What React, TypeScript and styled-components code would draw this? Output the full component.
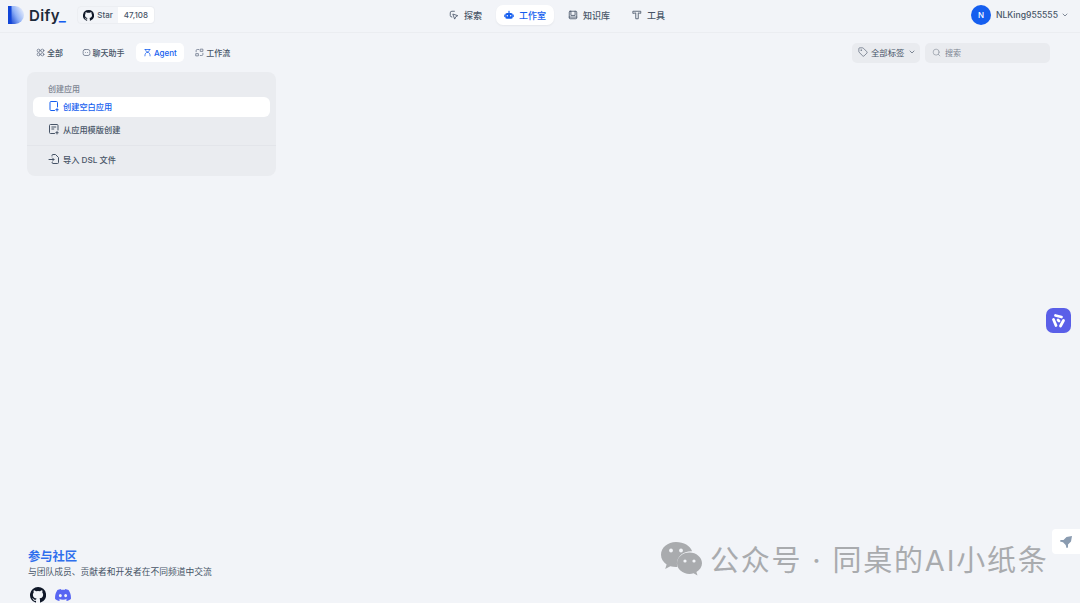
import React from 'react';
import styled, { createGlobalStyle } from 'styled-components';
import { ChevronDown, Search, Tag } from 'lucide-react';

const GlobalStyle = createGlobalStyle`
  html, body {
    margin: 0;
    height: 100%;
    overflow: hidden;
    background: #f2f4f8;
    font-family: Inter, "Noto Sans CJK SC", "Liberation Sans", sans-serif;
  }
  #root { height: 100%; }
`;

const Page = styled.div`
  position: relative;
  height: 603px;
  display: flex;
  flex-direction: column;
  overflow: hidden;
`;

const Header = styled.header`
  height: 30px;
  padding: 0 11px 2px 8px;
  flex-shrink: 0;
  display: grid;
  grid-template-columns: 433px auto 1fr;
  align-items: center;
  border-bottom: 1px solid #ebedf1;
`;

const Brand = styled.div`
  display: flex;
  align-items: center;
`;

const LogoText = styled.span`
  margin-left: 5px;
  font-size: 15px;
  font-weight: 600;
  letter-spacing: 0.4px;
  color: #1d2939;
`;

const LogoDash = styled.span`
  color: #155eef;
`;

const StarBadge = styled.div`
  margin-left: 11px;
  height: 16px;
  display: flex;
  align-items: center;
  border-radius: 4px;
  border: 1px solid #eceef2;
  font-size: 8px;
  font-weight: 500;
  color: #475467;
`;

const StarLabel = styled.span`
  display: flex;
  align-items: center;
  gap: 3px;
  padding: 0 5px;
`;

const StarCount = styled.span`
  height: 100%;
  display: flex;
  align-items: center;
  padding: 0 6px;
  background: #fff;
  border-radius: 0 4px 4px 0;
`;

const Nav = styled.nav`
  display: flex;
  align-items: center;
  gap: 6px;
`;

const NavItem = styled.div<{ $active?: boolean }>`
  height: 20px;
  display: flex;
  align-items: center;
  gap: 5px;
  padding: 0 8px;
  border-radius: 7px;
  font-size: 9px;
  font-weight: 500;
  color: ${({ $active }) => ($active ? '#155eef' : '#475467')};
  background: ${({ $active }) => ($active ? '#fff' : 'transparent')};
  box-shadow: ${({ $active }) => ($active ? '0 1px 2px rgba(16, 24, 40, 0.06)' : 'none')};
`;

const Account = styled.div`
  justify-self: end;
  display: flex;
  align-items: center;
  gap: 3px;
  font-size: 8.6px;
  font-weight: 500;
  color: #475467;
`;

const Avatar = styled.span`
  width: 20px;
  height: 20px;
  margin-right: 2px;
  border-radius: 50%;
  display: flex;
  align-items: center;
  justify-content: center;
  background: #155eef;
  color: #fff;
  font-size: 8px;
`;

const Main = styled.main`
  flex: 1;
  min-height: 0;
  display: flex;
  flex-direction: column;
  padding: 10px 30px 0 27px;
`;

const Toolbar = styled.div`
  display: flex;
  align-items: flex-start;
  justify-content: space-between;
  height: 21px;
`;

const Tabs = styled.div`
  display: flex;
  gap: 4.5px;
  padding-left: 2px;
`;

const Tab = styled.div<{ $active?: boolean }>`
  height: 19px;
  display: flex;
  align-items: center;
  gap: 2px;
  padding: 0 7px;
  border-radius: 5px;
  font-size: 8px;
  font-weight: 500;
  color: ${({ $active }) => ($active ? '#155eef' : '#475467')};
  background: ${({ $active }) => ($active ? '#fff' : 'transparent')};
`;

const Filters = styled.div`
  display: flex;
  gap: 5px;
`;

const TagFilter = styled.div`
  width: 68px;
  height: 20px;
  box-sizing: border-box;
  display: flex;
  align-items: center;
  gap: 3px;
  padding: 0 0 2px 6px;
  border-radius: 5px;
  background: #e9ebef;
  font-size: 8.4px;
  color: #475467;
`;

const SearchBox = styled.div`
  width: 125px;
  height: 20px;
  box-sizing: border-box;
  display: flex;
  align-items: center;
  gap: 4px;
  padding: 0 0 1px 7px;
  border-radius: 5px;
  background: #e9ebef;
  font-size: 8px;
  color: #7d8592;
`;

const CreateCard = styled.section`
  margin-top: 8px;
  width: 249px;
  box-sizing: border-box;
  padding: 6px 6px;
  border-radius: 8px;
  background: #eaecf0;
`;

const CardTitle = styled.div`
  height: 17px;
  padding: 2px 0 0 15px;
  display: flex;
  align-items: center;
  font-size: 8px;
  font-weight: 500;
  color: #7d8592;
`;

const CardItem = styled.div<{ $active?: boolean }>`
  height: 18px;
  padding: 0 0 2px 15px;
  display: flex;
  align-items: center;
  gap: 3px;
  border-radius: 6px;
  font-size: 8.2px;
  font-weight: 500;
  color: ${({ $active }) => ($active ? '#155eef' : '#475467')};
  background: ${({ $active }) => ($active ? '#fff' : 'transparent')};

  & + & {
    margin-top: 3px;
  }
`;

const CardDivider = styled.div`
  height: 1px;
  margin: 5px -6px 4px;
  background: #e3e5ea;
`;

const Footer = styled.footer`
  margin-top: auto;
  padding-left: 1px;
`;

const FooterTitle = styled.h2`
  margin: 0;
  font-size: 12.25px;
  line-height: 16px;
  font-weight: 700;
  color: #2f6fed;
`;

const FooterText = styled.p`
  margin: 0;
  font-size: 8.76px;
  line-height: 14px;
  color: #475467;
`;

const FooterLinks = styled.div`
  margin-top: 8px;
  height: 16px;
  display: flex;
  gap: 9px;
  padding-left: 2px;
`;

const Watermark = styled.div`
  position: absolute;
  left: 660px;
  top: 537px;
  display: flex;
  align-items: center;
  gap: 7px;
  font-size: 29px;
  letter-spacing: 1.8px;
  color: #a9abae;
  white-space: nowrap;
`;

const FloatBadge = styled.div`
  position: absolute;
  left: 1046px;
  top: 308px;
  width: 25px;
  height: 25px;
  border-radius: 7px;
  background: #5a5fe8;
  display: flex;
  align-items: center;
  justify-content: center;
`;

const RocketTab = styled.div`
  position: absolute;
  right: 0;
  top: 529px;
  width: 28px;
  height: 25px;
  border-radius: 4px 0 0 4px;
  background: #fff;
  display: flex;
  align-items: center;
  padding-left: 7px;
  box-sizing: border-box;
`;

type IconProps = { size?: number; color?: string };

const Stroke = ({ size = 9, color = '#667085', children }: IconProps & { children: React.ReactNode }) => (
  <svg width={size} height={size} viewBox="0 0 12 12" fill="none" stroke={color} strokeWidth="1" strokeLinecap="round" strokeLinejoin="round">
    {children}
  </svg>
);

const LogoMark = () => (
  <svg width="16" height="18" viewBox="0 0 16 18">
    <defs>
      <linearGradient id="logoFill" x1="0" y1="0.8" x2="1" y2="0.2">
        <stop offset="0" stopColor="#0b3bd0" />
        <stop offset="0.5" stopColor="#8fb0f6" />
        <stop offset="1" stopColor="#eef2fc" />
      </linearGradient>
    </defs>
    <path d="M0 0h7a9 9 0 0 1 0 18H0z" fill="url(#logoFill)" />
    <rect width="3.500" height="18" fill="#1145d8" />
  </svg>
);

const GithubMark = ({ size = 11 }: { size?: number }) => (
  <svg width={size} height={size} viewBox="0 0 16 16" fill="#101828">
    <path d="M8 0a8 8 0 0 0-2.530 15.590c.400.070.550-.170.550-.380v-1.340c-2.230.480-2.700-1.070-2.700-1.070-.360-.930-.890-1.170-.890-1.170-.730-.500.050-.490.050-.490.800.060 1.230.830 1.230.830.710 1.220 1.870.870 2.330.660.070-.520.280-.870.510-1.070-1.780-.200-3.640-.890-3.640-3.950 0-.870.310-1.590.820-2.150-.080-.200-.360-1.020.080-2.120 0 0 .670-.210 2.200.820a7.600 7.600 0 0 1 4 0c1.530-1.040 2.200-.820 2.200-.820.440 1.100.160 1.920.080 2.120.510.560.820 1.270.820 2.150 0 3.070-1.870 3.750-3.650 3.950.290.250.540.730.540 1.480v2.200c0 .210.150.460.550.380A8 8 0 0 0 8 0z" />
  </svg>
);

const DiscordMark = () => (
  <svg width="16" height="16" viewBox="0 0 16 16" fill="#5865f2">
    <path d="M13.550 3.020A13.200 13.200 0 0 0 10.300 2c-.140.250-.300.590-.410.860a12.200 12.200 0 0 0-3.780 0A9 9 0 0 0 5.700 2a13.200 13.200 0 0 0-3.260 1.020C.380 6.100-.180 9.100.100 12.060A13.300 13.300 0 0 0 4.100 14.100c.320-.440.600-.900.850-1.400-.470-.170-.910-.390-1.330-.640l.330-.260a9.500 9.500 0 0 0 8.100 0l.330.260c-.420.250-.870.470-1.330.640.250.500.530.960.850 1.400a13.300 13.300 0 0 0 4-2.040c.330-3.430-.560-6.400-2.350-9.040zM5.350 10.240c-.790 0-1.440-.730-1.440-1.620s.630-1.620 1.440-1.620 1.450.730 1.440 1.620c0 .890-.640 1.620-1.440 1.620zm5.300 0c-.790 0-1.440-.730-1.440-1.620s.630-1.620 1.440-1.620 1.450.730 1.440 1.620c0 .890-.630 1.620-1.440 1.620z" />
  </svg>
);

const WechatMark = () => (
  <svg width="43" height="35" viewBox="0 0 43 35">
    <path d="M16 1C7.700 1 1 6.700 1 13.700c0 4 2.200 7.500 5.600 9.800L5.200 28l5.100-2.700c1.800.500 3.700.800 5.700.800.500 0 1 0 1.400-.100-.300-1.100-.500-2.200-.500-3.400 0-6.900 6.400-12.400 14.200-12.400h1C30.300 4.800 23.800 1 16 1z" fill="#a9abae" />
    <circle cx="11" cy="9.500" r="1.900" fill="#f2f4f8" />
    <circle cx="21" cy="9.500" r="1.900" fill="#f2f4f8" />
    <path d="M42 22.200C42 16.300 36.300 11.500 29.500 11.500S17 16.300 17 22.200s5.700 10.700 12.500 10.700c1.500 0 2.800-.200 4.100-.600l3.900 2.200-1.100-3.600c3.400-2 5.600-5.100 5.600-8.700z" fill="#a9abae" />
    <circle cx="25" cy="20" r="1.600" fill="#f2f4f8" />
    <circle cx="34" cy="20" r="1.600" fill="#f2f4f8" />
  </svg>
);

const tabs = [
  {
    label: '全部',
    icon: (
      <Stroke>
        <circle cx="3.500" cy="3.500" r="2" />
        <circle cx="8.500" cy="3.500" r="2" />
        <circle cx="3.500" cy="8.500" r="2" />
        <circle cx="8.500" cy="8.500" r="2" />
      </Stroke>
    ),
  },
  {
    label: '聊天助手',
    icon: (
      <Stroke>
        <rect x="1.500" y="2" width="9" height="8" rx="2.500" />
        <path d="M4.500 6h.010M7.500 6h.010" />
      </Stroke>
    ),
  },
  {
    label: 'Agent',
    active: true,
    icon: (
      <Stroke color="#155eef">
        <path d="M2.500 2h7M3.500 2c0 2 1 3.500 2.500 3.500S8.500 4 8.500 2M6 5.500c-2 0-3.500 2-3.500 5M6 5.500c2 0 3.500 2 3.500 5" />
      </Stroke>
    ),
  },
  {
    label: '工作流',
    icon: (
      <Stroke>
        <path d="M5 2H3a1.500 1.500 0 0 0-1.500 1.500V5M7 10h2a1.500 1.500 0 0 0 1.500-1.500V7M7.500 1.500h3v3h-3zM1.500 7.500h3v3h-3z" />
      </Stroke>
    ),
  },
];

const navItems = [
  {
    label: '探索',
    icon: (
      <Stroke size={10} color="#475467">
        <path d="M6.500 1.500h-3a2 2 0 0 0-2 2v3a2 2 0 0 0 2 2" />
        <path d="M5 5l5.500 1.800-2.300 1.200-1.200 2.500z" />
      </Stroke>
    ),
  },
  {
    label: '工作室',
    active: true,
    icon: (
      <svg width="10" height="10" viewBox="0 0 12 12" fill="#155eef">
        <rect x="1.500" y="3.500" width="9" height="7" rx="2.200" />
        <rect x="5.300" y="1" width="1.400" height="3" />
        <rect x="0.300" y="5.500" width="1.200" height="3" />
        <rect x="10.500" y="5.500" width="1.200" height="3" />
        <circle cx="4" cy="7" r="0.900" fill="#fff" />
        <circle cx="8" cy="7" r="0.900" fill="#fff" />
      </svg>
    ),
  },
  {
    label: '知识库',
    icon: (
      <Stroke size={10} color="#475467">
        <rect x="1.500" y="1.500" width="9" height="9" rx="1" />
        <path d="M1.500 8.500h9M3.500 1.500v5h5v-5" />
      </Stroke>
    ),
  },
  {
    label: '工具',
    icon: (
      <Stroke size={10} color="#475467">
        <path d="M1.500 1.500h9v2.500l-3-.500v7h-3v-7l-3 .500z" />
      </Stroke>
    ),
  },
];

export default function App() {
  return (
    <Page>
      <GlobalStyle />
      <Header>
        <Brand>
          <LogoMark />
          <LogoText>
            Dify<LogoDash>_</LogoDash>
          </LogoText>
          <StarBadge>
            <StarLabel>
              <GithubMark />
              Star
            </StarLabel>
            <StarCount>47,108</StarCount>
          </StarBadge>
        </Brand>
        <Nav>
          {navItems.map(({ label, active, icon }) => (
            <NavItem key={label} $active={active}>
              {icon}
              {label}
            </NavItem>
          ))}
        </Nav>
        <Account>
          <Avatar>N</Avatar>
          NLKing955555
          <ChevronDown size={8} />
        </Account>
      </Header>
      <Main>
        <Toolbar>
          <Tabs>
            {tabs.map(({ label, active, icon }) => (
              <Tab key={label} $active={active}>
                {icon}
                {label}
              </Tab>
            ))}
          </Tabs>
          <Filters>
            <TagFilter>
              <Tag size={10} strokeWidth={1.5} />
              全部标签
              <ChevronDown size={8} />
            </TagFilter>
            <SearchBox>
              <Search size={9} strokeWidth={1.5} />
              搜索
            </SearchBox>
          </Filters>
        </Toolbar>
        <CreateCard>
          <CardTitle>创建应用</CardTitle>
          <CardItem $active>
            <Stroke size={12} color="#155eef">
              <path d="M6.500 10.500H3a1 1 0 0 1-1-1v-7a1 1 0 0 1 1-1h5.500a1 1 0 0 1 1 1v4.500M9 8.500v2.500M7.800 9.700h2.400" />
            </Stroke>
            创建空白应用
          </CardItem>
          <CardItem>
            <Stroke size={12} color="#475467">
              <path d="M6.500 10.500H2.500a1 1 0 0 1-1-1v-7a1 1 0 0 1 1-1h6.500a1 1 0 0 1 1 1v4.500M3.800 4h4M3.800 6h2M9 8.500v2.500M7.800 9.700h2.400" />
            </Stroke>
            从应用模版创建
          </CardItem>
          <CardDivider />
          <CardItem>
            <Stroke size={12} color="#475467">
              <path d="M4 3V2.500a1 1 0 0 1 1-1h2.500l3 3v5a1 1 0 0 1-1 1H5a1 1 0 0 1-1-1M1 6.500h5M4.500 5L6 6.500 4.500 8" />
            </Stroke>
            导入 DSL 文件
          </CardItem>
        </CreateCard>
        <Footer>
          <FooterTitle>参与社区</FooterTitle>
          <FooterText>与团队成员、贡献者和开发者在不同频道中交流</FooterText>
          <FooterLinks>
            <GithubMark size={16} />
            <DiscordMark />
          </FooterLinks>
        </Footer>
      </Main>
      <Watermark>
        <WechatMark />
        公众号 · 同桌的AI小纸条
      </Watermark>
      <FloatBadge>
        <svg width="17" height="17" viewBox="0 0 17 17" fill="none" stroke="#fff" strokeWidth="2.800" strokeLinecap="round">
          <path d="M5.500 3.500l6 1.500M3.500 7.500L6 13.500M10.500 14l3-5.500M8 8l1 1" />
        </svg>
      </FloatBadge>
      <RocketTab>
        <svg width="14" height="14" viewBox="0 0 14 14" fill="#8a9bb0">
          <path d="M13 1L7.500 2 4.500 5H1.500L1 6.500l3 .800L6.700 10l.800 3 1.500-.500V9.500l3-3z" />
        </svg>
      </RocketTab>
    </Page>
  );
}
